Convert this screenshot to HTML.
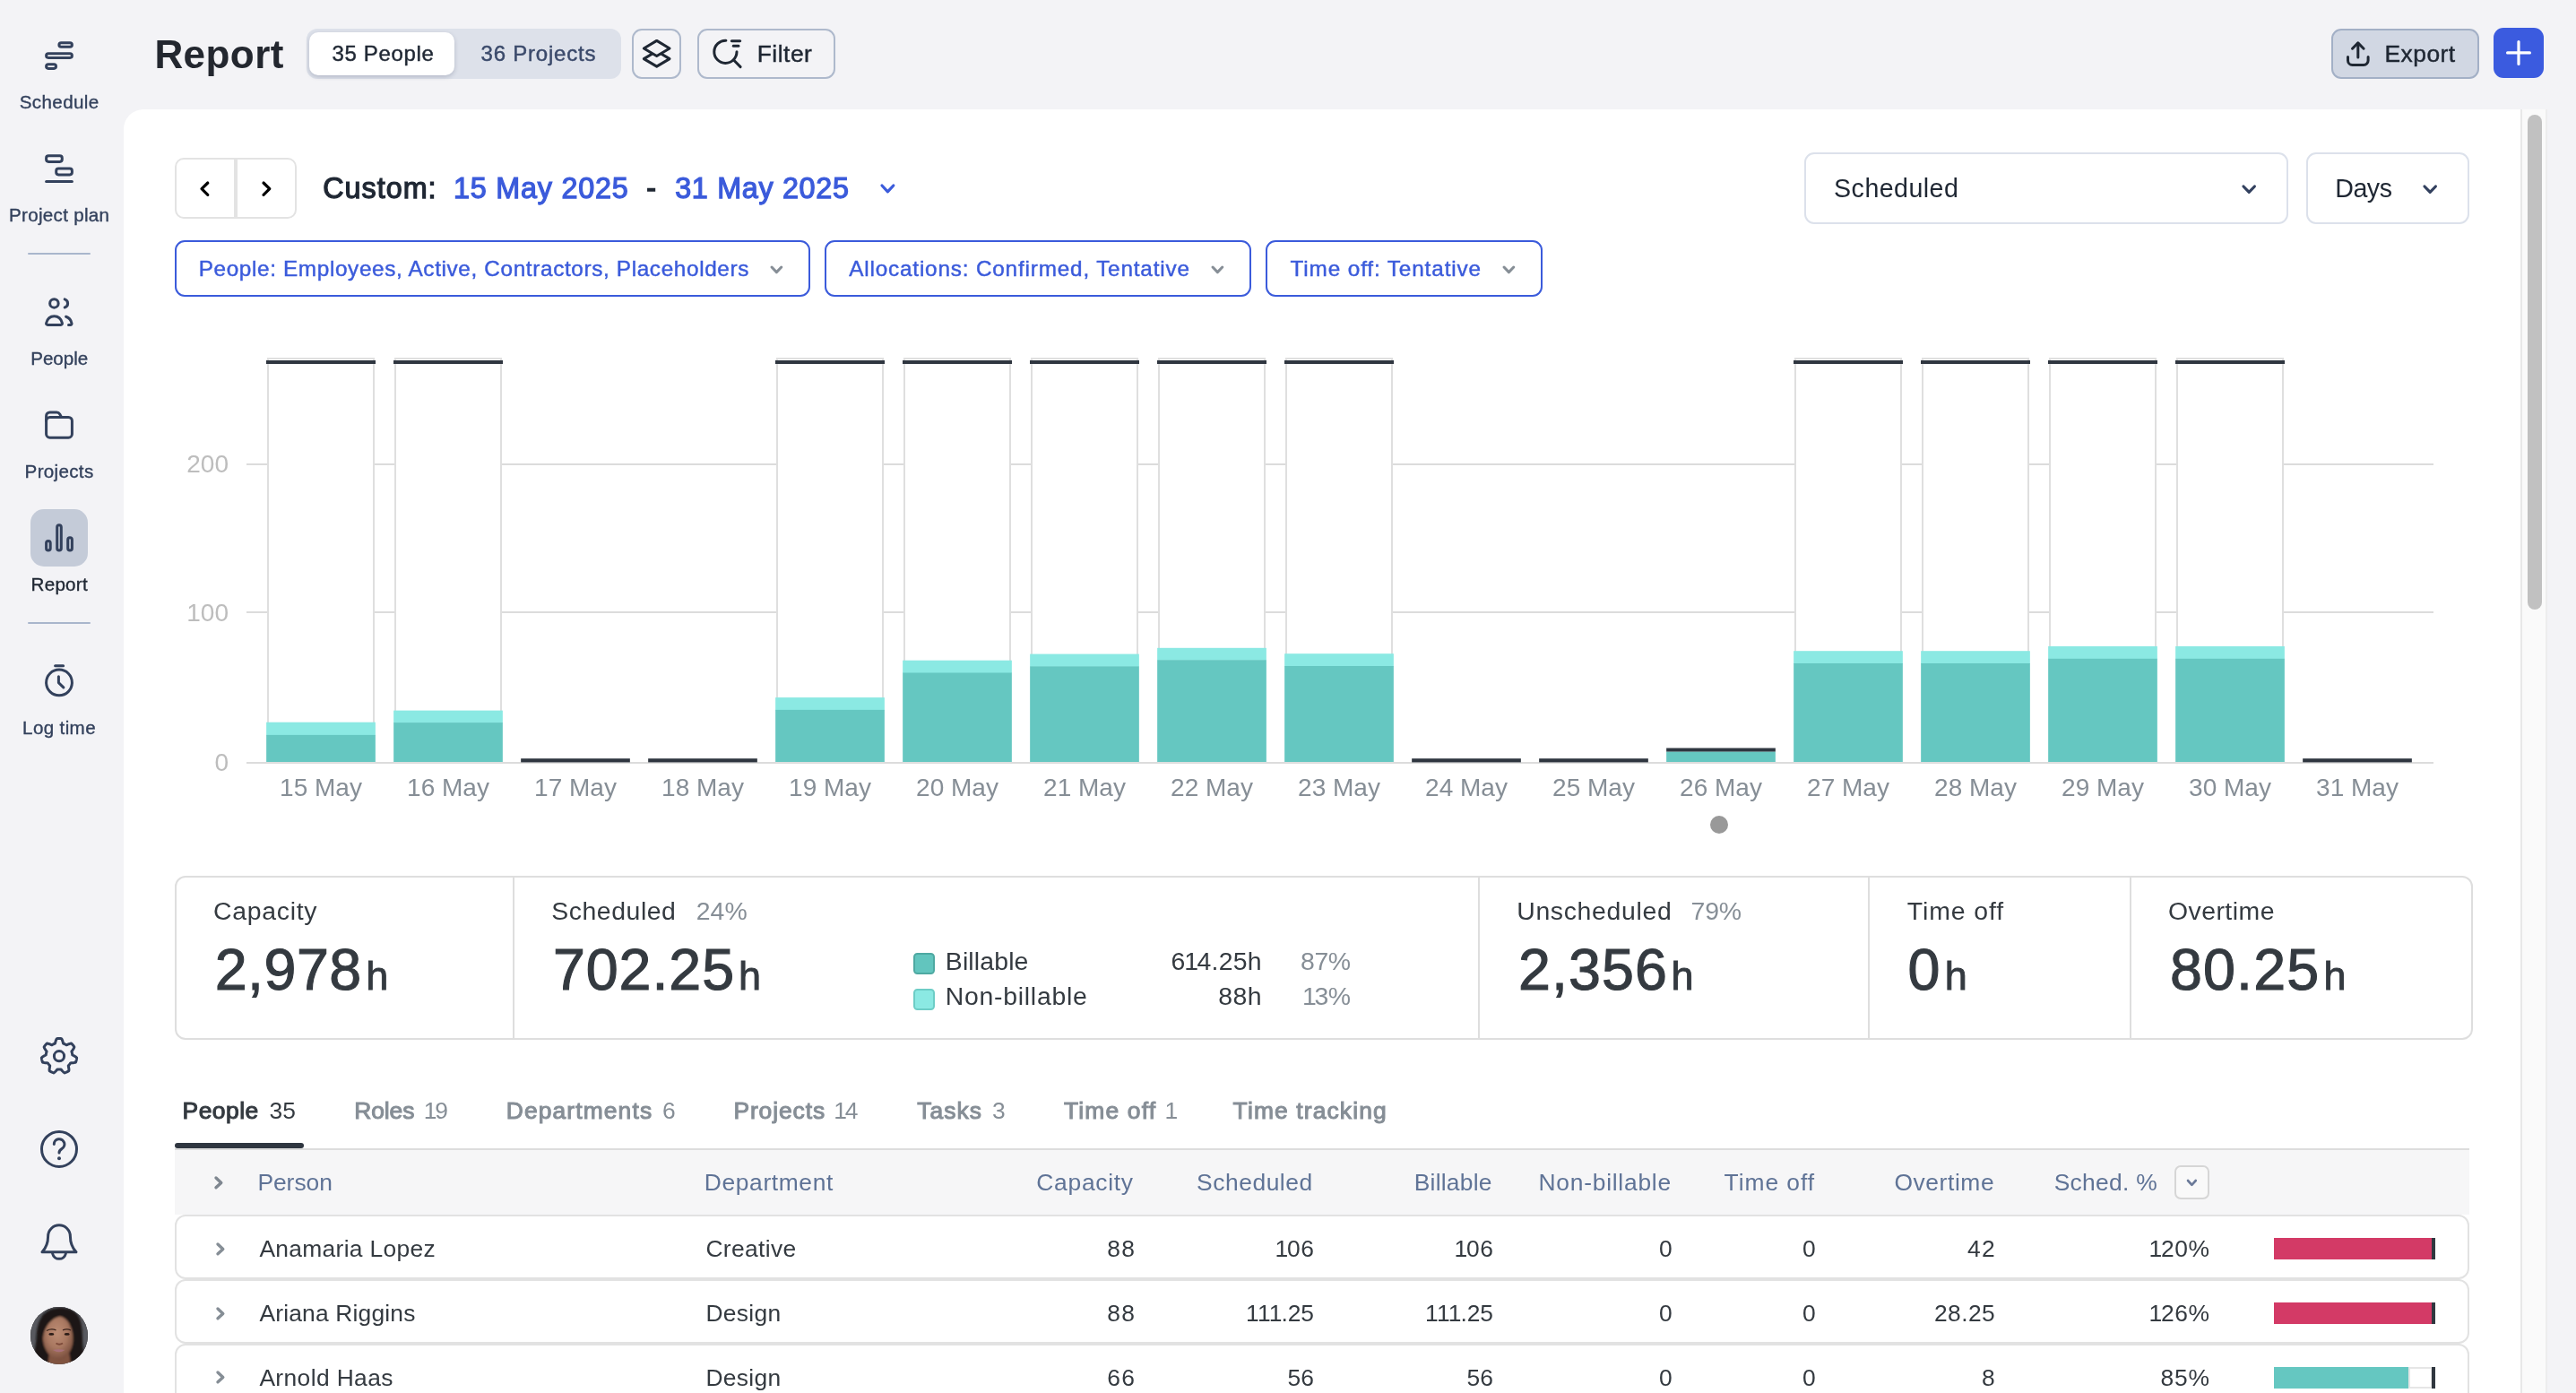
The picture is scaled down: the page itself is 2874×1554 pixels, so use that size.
<!DOCTYPE html>
<html lang="en"><head><meta charset="utf-8"><title>Report</title>
<style>
html,body{margin:0;padding:0;}
html{width:2874px;height:1554px;overflow:hidden;}
body{width:2874px;height:1554px;overflow:hidden;background:#f3f3f6;position:relative;font-family:"Liberation Sans",sans-serif;}
#root{position:absolute;left:0;top:0;width:2874px;height:1554px;overflow:hidden;will-change:transform;}
.b{position:absolute;box-sizing:border-box;}
.t{position:absolute;white-space:nowrap;line-height:1;}
.n1{margin:0 -0.065em 0 -0.055em;}
.n1b{margin:0 -0.035em 0 -0.03em;}
svg{display:block;overflow:visible;}
</style></head><body><div id="root">
<div class="t" style="top:104.01px;font-size:20.60px;color:#33415c;letter-spacing:0.375px;left:66.14px;width:0;display:flex;justify-content:center;-webkit-text-stroke:0.35px #33415c;"><span id="t1">Schedule</span></div>
<div class="t" style="top:230.01px;font-size:20.60px;color:#33415c;letter-spacing:0.294px;left:66.15px;width:0;display:flex;justify-content:center;-webkit-text-stroke:0.35px #33415c;"><span id="t2">Project plan</span></div>
<div class="t" style="top:390.01px;font-size:20.60px;color:#33415c;letter-spacing:-0.025px;left:66.19px;width:0;display:flex;justify-content:center;-webkit-text-stroke:0.35px #33415c;"><span id="t3">People</span></div>
<div class="t" style="top:516.01px;font-size:20.60px;color:#33415c;letter-spacing:0.313px;left:66.06px;width:0;display:flex;justify-content:center;-webkit-text-stroke:0.35px #33415c;"><span id="t4">Projects</span></div>
<div class="b" style="left:34.20px;top:568.10px;width:63.80px;height:64.00px;background:#c4cbd8;border-radius:15px;"></div>
<div class="t" style="top:642.01px;font-size:20.60px;color:#1f2733;letter-spacing:0.237px;left:66.22px;width:0;display:flex;justify-content:center;-webkit-text-stroke:0.35px #1f2733;"><span id="t5">Report</span></div>
<div class="t" style="top:802.02px;font-size:20.60px;color:#33415c;letter-spacing:0.357px;left:66.03px;width:0;display:flex;justify-content:center;-webkit-text-stroke:0.35px #33415c;"><span id="t6">Log time</span></div>
<div class="b" style="left:31.00px;top:281.70px;width:70.00px;height:2.40px;background:#a9b6cc;border-radius:1px;"></div>
<div class="b" style="left:31.00px;top:693.60px;width:70.00px;height:2.40px;background:#a9b6cc;border-radius:1px;"></div>
<svg class="b" style="left:0.00px;top:0.00px;" width="138" height="1554" viewBox="0 0 138 1554"><rect x="65.9" y="47.7" width="14.5" height="4.6" rx="2.3" fill="none" stroke="#33415c" stroke-width="3" stroke-linecap="round" stroke-linejoin="round"/><rect x="51.6" y="59.7" width="28.8" height="4.7" rx="2.35" fill="none" stroke="#33415c" stroke-width="3" stroke-linecap="round" stroke-linejoin="round"/><rect x="51.6" y="71.8" width="10.9" height="4.6" rx="2.3" fill="none" stroke="#33415c" stroke-width="3" stroke-linecap="round" stroke-linejoin="round"/><rect x="51.6" y="173.8" width="17.7" height="6.6" rx="2.6" fill="none" stroke="#33415c" stroke-width="3" stroke-linecap="round" stroke-linejoin="round"/><rect x="62.7" y="188.1" width="17.7" height="6.8" rx="2.6" fill="none" stroke="#33415c" stroke-width="3" stroke-linecap="round" stroke-linejoin="round"/><path d="M51.6 202.5 H80.4" fill="none" stroke="#33415c" stroke-width="3" stroke-linecap="round" stroke-linejoin="round"/><circle cx="60.4" cy="338.4" r="4.75" fill="none" stroke="#33415c" stroke-width="3" stroke-linecap="round" stroke-linejoin="round"/><path d="M53.2 362.5 h14.6 a1.6 1.6 0 0 0 1.6 -2 c-1.2 -4.8 -4.6 -7.7 -8.9 -7.7 s-7.7 2.9 -8.9 7.7 a1.6 1.6 0 0 0 1.6 2 z" fill="none" stroke="#33415c" stroke-width="3" stroke-linecap="round" stroke-linejoin="round"/><path d="M72.2 333.9 a4.75 4.75 0 0 1 0 9.1" fill="none" stroke="#33415c" stroke-width="3" stroke-linecap="round" stroke-linejoin="round"/><path d="M73.6 353.3 c3.4 1.1 5.6 3.7 6.4 7.4 a1.5 1.5 0 0 1 -1.5 1.8 h-2" fill="none" stroke="#33415c" stroke-width="3" stroke-linecap="round" stroke-linejoin="round"/><rect x="51.6" y="465.4" width="28.8" height="22.8" rx="4" fill="none" stroke="#33415c" stroke-width="3" stroke-linecap="round" stroke-linejoin="round"/><path d="M51.6 469.5 v-5.5 a4 4 0 0 1 4 -4 h7.6 a4 4 0 0 1 3.5 2 l1.9 3.4" fill="none" stroke="#33415c" stroke-width="3" stroke-linecap="round" stroke-linejoin="round"/><rect x="51.6" y="603.4" width="4.6" height="10.7" rx="2.3" fill="none" stroke="#33415c" stroke-width="3" stroke-linecap="round" stroke-linejoin="round"/><rect x="63.7" y="585.7" width="4.6" height="28.4" rx="2.3" fill="none" stroke="#33415c" stroke-width="3" stroke-linecap="round" stroke-linejoin="round"/><rect x="75.7" y="599.8" width="4.7" height="14.3" rx="2.3" fill="none" stroke="#33415c" stroke-width="3" stroke-linecap="round" stroke-linejoin="round"/><circle cx="66" cy="761.4" r="14.4" fill="none" stroke="#33415c" stroke-width="3" stroke-linecap="round" stroke-linejoin="round"/><path d="M61.6 742.7 H70.6" fill="none" stroke="#33415c" stroke-width="3" stroke-linecap="round" stroke-linejoin="round"/><path d="M65.4 754.8 V761.6 L70.8 766.9" fill="none" stroke="#33415c" stroke-width="3" stroke-linecap="round" stroke-linejoin="round"/><path d="M66.00 1158.50 L66.63 1158.51 L67.26 1158.54 L67.89 1158.59 L68.52 1158.66 L69.04 1159.39 L69.47 1160.36 L69.84 1161.38 L70.14 1162.41 L70.39 1163.40 L70.66 1164.15 L71.11 1164.31 L71.55 1164.48 L71.99 1164.67 L72.42 1164.87 L72.85 1165.08 L73.26 1165.30 L73.67 1165.54 L74.07 1165.80 L74.84 1165.53 L75.76 1165.12 L76.76 1164.71 L77.78 1164.36 L78.81 1164.09 L79.70 1164.05 L80.15 1164.50 L80.58 1164.96 L81.00 1165.43 L81.40 1165.92 L81.79 1166.42 L82.16 1166.93 L82.51 1167.45 L82.85 1167.99 L82.60 1168.85 L82.12 1169.79 L81.54 1170.72 L80.93 1171.59 L80.31 1172.40 L79.89 1173.09 L80.05 1173.54 L80.19 1173.99 L80.32 1174.45 L80.43 1174.91 L80.53 1175.37 L80.61 1175.84 L80.68 1176.31 L80.73 1176.78 L81.41 1177.21 L82.31 1177.68 L83.25 1178.20 L84.17 1178.78 L85.02 1179.42 L85.61 1180.09 L85.54 1180.72 L85.45 1181.34 L85.34 1181.97 L85.21 1182.58 L85.06 1183.20 L84.89 1183.81 L84.70 1184.41 L84.49 1185.00 L83.66 1185.35 L82.62 1185.56 L81.54 1185.68 L80.47 1185.75 L79.46 1185.78 L78.66 1185.87 L78.40 1186.27 L78.14 1186.67 L77.86 1187.05 L77.57 1187.43 L77.27 1187.79 L76.96 1188.15 L76.63 1188.50 L76.30 1188.83 L76.38 1189.63 L76.58 1190.63 L76.76 1191.69 L76.87 1192.77 L76.90 1193.83 L76.75 1194.71 L76.21 1195.05 L75.67 1195.36 L75.11 1195.67 L74.55 1195.95 L73.97 1196.21 L73.39 1196.46 L72.80 1196.69 L72.21 1196.90 L71.42 1196.47 L70.61 1195.78 L69.84 1195.02 L69.12 1194.22 L68.46 1193.44 L67.89 1192.88 L67.42 1192.93 L66.95 1192.97 L66.47 1192.99 L66.00 1193.00 L65.53 1192.99 L65.05 1192.97 L64.58 1192.93 L64.11 1192.88 L63.54 1193.44 L62.88 1194.22 L62.16 1195.02 L61.39 1195.78 L60.58 1196.47 L59.79 1196.90 L59.20 1196.69 L58.61 1196.46 L58.03 1196.21 L57.45 1195.95 L56.89 1195.67 L56.33 1195.36 L55.79 1195.05 L55.25 1194.71 L55.10 1193.83 L55.13 1192.77 L55.24 1191.69 L55.42 1190.63 L55.62 1189.63 L55.70 1188.83 L55.37 1188.50 L55.04 1188.15 L54.73 1187.79 L54.43 1187.43 L54.14 1187.05 L53.86 1186.67 L53.60 1186.27 L53.34 1185.87 L52.54 1185.78 L51.53 1185.75 L50.46 1185.68 L49.38 1185.56 L48.34 1185.35 L47.51 1185.00 L47.30 1184.41 L47.11 1183.81 L46.94 1183.20 L46.79 1182.58 L46.66 1181.97 L46.55 1181.34 L46.46 1180.72 L46.39 1180.09 L46.98 1179.42 L47.83 1178.78 L48.75 1178.20 L49.69 1177.68 L50.59 1177.21 L51.27 1176.78 L51.32 1176.31 L51.39 1175.84 L51.47 1175.37 L51.57 1174.91 L51.68 1174.45 L51.81 1173.99 L51.95 1173.54 L52.11 1173.09 L51.69 1172.40 L51.07 1171.59 L50.46 1170.72 L49.88 1169.79 L49.40 1168.85 L49.15 1167.99 L49.49 1167.45 L49.84 1166.93 L50.21 1166.42 L50.60 1165.92 L51.00 1165.43 L51.42 1164.96 L51.85 1164.50 L52.30 1164.05 L53.19 1164.09 L54.22 1164.36 L55.24 1164.71 L56.24 1165.12 L57.16 1165.53 L57.93 1165.80 L58.33 1165.54 L58.74 1165.30 L59.15 1165.08 L59.58 1164.87 L60.01 1164.67 L60.45 1164.48 L60.89 1164.31 L61.34 1164.15 L61.61 1163.40 L61.86 1162.41 L62.16 1161.38 L62.53 1160.36 L62.96 1159.39 L63.48 1158.66 L64.11 1158.59 L64.74 1158.54 L65.37 1158.51 Z" fill="none" stroke="#33415c" stroke-width="3" stroke-linecap="round" stroke-linejoin="round"/><circle cx="66" cy="1178.2" r="5.6" fill="none" stroke="#33415c" stroke-width="3" stroke-linecap="round" stroke-linejoin="round"/><circle cx="66" cy="1281.9" r="19.5" fill="none" stroke="#33415c" stroke-width="3" stroke-linecap="round" stroke-linejoin="round"/><path d="M60.3 1276.6 a5.8 5.8 0 1 1 8.6 5 c-2 1.2 -2.9 2.3 -2.9 4.4" fill="none" stroke="#33415c" stroke-width="3" stroke-linecap="round" stroke-linejoin="round"/><circle cx="66" cy="1292.2" r="2" fill="#33415c"/><path d="M47 1396.8 c4.2 -4.6 6.6 -9 6.6 -17.6 a12.4 12.4 0 0 1 24.8 0 c0 8.600 2.4 13 6.600 17.600 z" fill="none" stroke="#33415c" stroke-width="3" stroke-linecap="round" stroke-linejoin="round"/><path d="M58.600 1398.500 a7.600 7.600 0 0 0 14.800 0" fill="none" stroke="#33415c" stroke-width="3" stroke-linecap="round" stroke-linejoin="round"/></svg>
<div class="b" style="left:34.00px;top:1457.70px;width:64.00px;height:64.00px;border-radius:50%;overflow:hidden;background:#1b1817;"><svg width="64" height="64" viewBox="0 0 64 64"><defs><radialGradient id="fg" cx="47%" cy="38%" r="62%"><stop offset="0" stop-color="#bd8d74"/><stop offset="0.55" stop-color="#a97861"/><stop offset="1" stop-color="#7a4f3e"/></radialGradient><filter id="bl" x="-20%" y="-20%" width="140%" height="140%"><feGaussianBlur stdDeviation="0.9"/></filter><filter id="bl2" x="-20%" y="-20%" width="140%" height="140%"><feGaussianBlur stdDeviation="0.5"/></filter></defs><rect width="64" height="64" fill="#58595f"/><g filter="url(#bl)"><path d="M3 70 C2 56 6 46 6.5 35 C7 22 10 12 16 7 C24 -1 44 -1 51 7 C57 13 58 25 58 36 C58 46 61 56 60 70 Z" fill="#1b1817"/><path d="M19 70 L21 50 L43 50 L46 70 Z" fill="#80523f"/><path d="M33 10.500 C24 12 15 22 14 34 C13.500 46 22 58.500 31 59 C40 59 47.500 48 47.500 36 C47.500 24 42 12 33 10.500 Z" fill="url(#fg)"/><path d="M36 8 C42 10 50 22 50 40 C50 48 48 54 44 60 L56 60 L57 30 L50 8 Z" fill="#1b1817"/><path d="M30 8 C22 12 15 20 13.500 34 C13 44 15 50 19 58 L7 60 L7.5 30 L14 8 Z" fill="#1b1817"/></g><g filter="url(#bl2)"><path d="M18 26.500 Q23 23.800 28.500 25.800" stroke="#3a241c" stroke-width="1.300" fill="none"/><path d="M36 25.800 Q41 23.800 45 26" stroke="#3a241c" stroke-width="1.300" fill="none"/><ellipse cx="23.300" cy="30.400" rx="3" ry="1.300" fill="#2b1b18"/><ellipse cx="40.700" cy="30.400" rx="3" ry="1.300" fill="#2b1b18"/><path d="M28.500 40.500 Q32 43 36 40.500" stroke="#7c4a39" stroke-width="1.800" fill="none"/><path d="M25 48 Q31.500 46.600 38.500 48 Q32 52.500 25 48 Z" fill="#a8707a"/></g></svg></div>
<span class="t" id="t7" style="top:39.00px;font-size:44.00px;color:#23272f;font-weight:700;letter-spacing:0.444px;left:172.40px;">Report</span>
<div class="b" style="left:341.60px;top:32.00px;width:351.10px;height:55.90px;background:#dde1ea;border-radius:12px;"></div>
<div class="b" style="left:344.90px;top:35.90px;width:162.20px;height:48.10px;background:#fff;border-radius:10px;box-shadow:0 2px 5px rgba(40,50,80,0.22);"></div>
<span class="t" id="t8" style="top:48.01px;font-size:24.00px;color:#1f2733;letter-spacing:0.651px;left:370.50px;-webkit-text-stroke:0.45px #1f2733;">35 People</span>
<span class="t" id="t9" style="top:48.01px;font-size:24.00px;color:#3b4a6b;letter-spacing:0.794px;left:536.50px;-webkit-text-stroke:0.45px #3b4a6b;">36 Projects</span>
<div class="b" style="left:705.40px;top:32.00px;width:54.90px;height:55.90px;border:2px solid #aeb9cc;border-radius:11px;"></div>
<svg class="b" style="left:705.40px;top:32.00px;" width="54.9" height="55.9" viewBox="0 0 54.9 55.9"><g fill="#f3f3f6" stroke="#1f2733" stroke-width="3" stroke-linejoin="round" stroke-linecap="round"><path d="M27.7 25.05 L42.05 33.6 L27.7 42.15 L13.35 33.6 Z"/><path d="M27.7 13.4 L42.05 21.95 L27.7 30.5 L13.35 21.95 Z"/></g></svg>
<div class="b" style="left:777.70px;top:32.00px;width:154.00px;height:55.90px;border:2px solid #aeb9cc;border-radius:11px;"></div>
<svg class="b" style="left:777.70px;top:32.00px;" width="60" height="55.9" viewBox="0 0 60 55.9"><g fill="none" stroke="#1f2733" stroke-width="3" stroke-linecap="round"><path d="M31.9 13.2 A12.6 12.6 0 1 0 44 25.8"/><path d="M40.6 35 L48.1 42.6"/><path d="M38.3 13.85 H47.7"/><path d="M40.3 19.3 H45.9"/></g></svg>
<span class="t" id="t10" style="top:47.01px;font-size:26.40px;color:#1f2733;letter-spacing:0.509px;left:844.70px;-webkit-text-stroke:0.45px #1f2733;">Filter</span>
<div class="b" style="left:2601.20px;top:32.00px;width:164.60px;height:55.90px;background:#d1d7e3;border:2px solid #a3b0c6;border-radius:11px;"></div>
<svg class="b" style="left:2601.20px;top:32.00px;" width="60" height="55.9" viewBox="0 0 60 55.9"><g fill="none" stroke="#1f2733" stroke-width="3" stroke-linecap="round" stroke-linejoin="round"><path d="M29.800 16.300 V32"/><path d="M23.500 22.200 L29.800 15.900 L36.100 22.200"/><path d="M18.500 31.400 V35.500 A5 5 0 0 0 23.500 40.500 H36.100 A5 5 0 0 0 41.100 35.500 V31.400"/></g></svg>
<span class="t" id="t11" style="top:47.01px;font-size:26.40px;color:#1f2733;letter-spacing:0.484px;left:2660.50px;-webkit-text-stroke:0.45px #1f2733;">Export</span>
<div class="b" style="left:2782.00px;top:31.10px;width:55.90px;height:55.90px;background:#3b5bdf;border-radius:11px;"></div>
<svg class="b" style="left:2782.00px;top:31.10px;" width="55.9" height="55.9" viewBox="0 0 55.9 55.9"><path d="M15.6 27.95 H40.4 M28 15.5 V40.4" fill="none" stroke="#fff" stroke-width="3.2" stroke-linecap="round"/></svg>
<div class="b" style="left:138.00px;top:122.00px;width:2704.00px;height:1432.00px;background:#fff;border-radius:22px 0 0 0;"></div>
<div class="b" style="left:2812.00px;top:122.00px;width:30.00px;height:1432.00px;background:#fafafa;border-left:2px solid #e8e8e8;border-right:2px solid #ededed;"></div>
<div class="b" style="left:2820.00px;top:128.00px;width:16.00px;height:552.00px;background:#c1c1c1;border-radius:8px;"></div>
<div class="b" style="left:195.00px;top:176.00px;width:136.00px;height:68.00px;border:2px solid #e3e3e3;border-radius:10px;"></div>
<div class="b" style="left:261.00px;top:176.00px;width:4.00px;height:68.00px;background:#e3e3e3;"></div>
<svg class="b" style="left:221.80px;top:200.80px;" width="12.8" height="19.4" viewBox="0 0 12.8 19.4"><path d="M9.8 3 L3 9.7 L9.8 16.4" fill="none" stroke="#000" stroke-width="3.2" stroke-linecap="round" stroke-linejoin="round"/></svg>
<svg class="b" style="left:291.20px;top:200.80px;" width="12.8" height="19.4" viewBox="0 0 12.8 19.4"><path d="M3 3 L9.8 9.7 L3 16.4" fill="none" stroke="#000" stroke-width="3.2" stroke-linecap="round" stroke-linejoin="round"/></svg>
<span class="t" id="t12" style="top:194.00px;font-size:32.30px;color:#1f2733;letter-spacing:0.992px;left:360.30px;-webkit-text-stroke:1.25px #1f2733;">Custom:</span>
<span class="t" id="t13" style="top:194.00px;font-size:32.30px;color:#3b5bdb;letter-spacing:0.797px;left:506.00px;-webkit-text-stroke:1.25px #3b5bdb;">15 May 2025</span>
<span class="t" id="t14" style="top:194.00px;font-size:32.30px;color:#1f2733;left:721.20px;-webkit-text-stroke:1.25px #1f2733;">-</span>
<span class="t" id="t15" style="top:194.00px;font-size:32.30px;color:#3b5bdb;letter-spacing:0.697px;left:753.20px;-webkit-text-stroke:1.25px #3b5bdb;">31 May 2025</span>
<svg class="b" style="left:981.10px;top:204.40px;" width="18.8" height="12.8" viewBox="0 0 18.8 12.8"><path d="M3 3 L9.4 9.8 L15.8 3" fill="none" stroke="#3b5bdb" stroke-width="3.2" stroke-linecap="round" stroke-linejoin="round"/></svg>
<div class="b" style="left:195.00px;top:268.00px;width:709.00px;height:63.40px;border:2px solid #3b5bdb;border-radius:11px;"></div>
<span class="t" id="t16" style="top:288.01px;font-size:24.30px;color:#3b5bdb;letter-spacing:0.647px;left:221.70px;-webkit-text-stroke:0.45px #3b5bdb;">People: Employees, Active, Contractors, Placeholders</span>
<svg class="b" style="left:857.60px;top:294.80px;" width="16.8" height="11.6" viewBox="0 0 16.8 11.6"><path d="M3 3 L8.4 8.6 L13.8 3" fill="none" stroke="#868e96" stroke-width="3" stroke-linecap="round" stroke-linejoin="round"/></svg>
<div class="b" style="left:920.00px;top:268.00px;width:476.00px;height:63.40px;border:2px solid #3b5bdb;border-radius:11px;"></div>
<span class="t" id="t17" style="top:288.01px;font-size:24.30px;color:#3b5bdb;letter-spacing:0.825px;left:947.20px;-webkit-text-stroke:0.45px #3b5bdb;">Allocations: Confirmed, Tentative</span>
<svg class="b" style="left:1349.90px;top:294.80px;" width="16.8" height="11.6" viewBox="0 0 16.8 11.6"><path d="M3 3 L8.4 8.6 L13.8 3" fill="none" stroke="#868e96" stroke-width="3" stroke-linecap="round" stroke-linejoin="round"/></svg>
<div class="b" style="left:1412.00px;top:268.00px;width:308.60px;height:63.40px;border:2px solid #3b5bdb;border-radius:11px;"></div>
<span class="t" id="t18" style="top:288.01px;font-size:24.30px;color:#3b5bdb;letter-spacing:0.881px;left:1439.50px;-webkit-text-stroke:0.45px #3b5bdb;">Time off: Tentative</span>
<svg class="b" style="left:1674.60px;top:294.80px;" width="16.8" height="11.6" viewBox="0 0 16.8 11.6"><path d="M3 3 L8.4 8.6 L13.8 3" fill="none" stroke="#868e96" stroke-width="3" stroke-linecap="round" stroke-linejoin="round"/></svg>
<div class="b" style="left:2013.00px;top:170.00px;width:540.00px;height:80.00px;border:2px solid #dce1eb;border-radius:11px;"></div>
<span class="t" id="t19" style="top:196.00px;font-size:28.60px;color:#1f2733;letter-spacing:0.457px;left:2046.10px;">Scheduled</span>
<svg class="b" style="left:2500.00px;top:205.20px;" width="18.4" height="12.4" viewBox="0 0 18.4 12.4"><path d="M3 3 L9.2 9.4 L15.4 3" fill="none" stroke="#33415f" stroke-width="3.2" stroke-linecap="round" stroke-linejoin="round"/></svg>
<div class="b" style="left:2573.00px;top:170.00px;width:182.00px;height:80.00px;border:2px solid #dce1eb;border-radius:11px;"></div>
<span class="t" id="t20" style="top:196.00px;font-size:28.60px;color:#1f2733;letter-spacing:-0.450px;left:2605.20px;">Days</span>
<svg class="b" style="left:2701.70px;top:205.20px;" width="18.4" height="12.4" viewBox="0 0 18.4 12.4"><path d="M3 3 L9.2 9.4 L15.4 3" fill="none" stroke="#33415f" stroke-width="3.2" stroke-linecap="round" stroke-linejoin="round"/></svg>
<svg class="b" style="left:0.00px;top:0.00px;pointer-events:none;" width="2874" height="1000" viewBox="0 0 2874 1000"><rect x="275" y="517.0" width="2440" height="2" fill="#dcdcdc"/><rect x="275" y="682.0" width="2440" height="2" fill="#dcdcdc"/><rect x="275" y="850.0" width="2440" height="2" fill="#dcdcdc"/><rect x="299.0" y="400" width="118" height="450.0" fill="#fff" stroke="#dfdfdf" stroke-width="2"/><rect x="297.00" y="402" width="122" height="4" fill="#2f3640"/><rect x="297.15" y="805.7" width="121.700" height="14.7" fill="#8be9e3"/><rect x="297.15" y="819.9" width="121.700" height="30.1" fill="#65c7c1"/><rect x="441.0" y="400" width="118" height="450.0" fill="#fff" stroke="#dfdfdf" stroke-width="2"/><rect x="439.00" y="402" width="122" height="4" fill="#2f3640"/><rect x="439.15" y="792.6" width="121.700" height="14.0" fill="#8be9e3"/><rect x="439.15" y="806.1" width="121.700" height="43.9" fill="#65c7c1"/><rect x="581.15" y="846.2" width="121.700" height="4.2" fill="#2f3640"/><rect x="723.15" y="846.2" width="121.700" height="4.2" fill="#2f3640"/><rect x="867.0" y="400" width="118" height="450.0" fill="#fff" stroke="#dfdfdf" stroke-width="2"/><rect x="865.00" y="402" width="122" height="4" fill="#2f3640"/><rect x="865.15" y="778.1" width="121.700" height="14.3" fill="#8be9e3"/><rect x="865.15" y="791.9" width="121.700" height="58.1" fill="#65c7c1"/><rect x="1009.0" y="400" width="118" height="450.0" fill="#fff" stroke="#dfdfdf" stroke-width="2"/><rect x="1007.00" y="402" width="122" height="4" fill="#2f3640"/><rect x="1007.15" y="736.7" width="121.700" height="14.3" fill="#8be9e3"/><rect x="1007.15" y="750.5" width="121.700" height="99.5" fill="#65c7c1"/><rect x="1151.0" y="400" width="118" height="450.0" fill="#fff" stroke="#dfdfdf" stroke-width="2"/><rect x="1149.00" y="402" width="122" height="4" fill="#2f3640"/><rect x="1149.15" y="729.6" width="121.700" height="14.3" fill="#8be9e3"/><rect x="1149.15" y="743.4" width="121.700" height="106.6" fill="#65c7c1"/><rect x="1293.0" y="400" width="118" height="450.0" fill="#fff" stroke="#dfdfdf" stroke-width="2"/><rect x="1291.00" y="402" width="122" height="4" fill="#2f3640"/><rect x="1291.15" y="722.8" width="121.700" height="14.0" fill="#8be9e3"/><rect x="1291.15" y="736.3" width="121.700" height="113.7" fill="#65c7c1"/><rect x="1435.0" y="400" width="118" height="450.0" fill="#fff" stroke="#dfdfdf" stroke-width="2"/><rect x="1433.00" y="402" width="122" height="4" fill="#2f3640"/><rect x="1433.15" y="729.2" width="121.700" height="14.3" fill="#8be9e3"/><rect x="1433.15" y="743.0" width="121.700" height="107.0" fill="#65c7c1"/><rect x="1575.15" y="846.2" width="121.700" height="4.2" fill="#2f3640"/><rect x="1717.15" y="846.2" width="121.700" height="4.2" fill="#2f3640"/><rect x="1859.15" y="838.4" width="121.700" height="11.6" fill="#65c7c1"/><rect x="1859.15" y="834.5" width="121.700" height="4" fill="#2f3640"/><rect x="2003.0" y="400" width="118" height="450.0" fill="#fff" stroke="#dfdfdf" stroke-width="2"/><rect x="2001.00" y="402" width="122" height="4" fill="#2f3640"/><rect x="2001.15" y="726.2" width="121.700" height="14.3" fill="#8be9e3"/><rect x="2001.15" y="740.0" width="121.700" height="110.0" fill="#65c7c1"/><rect x="2145.0" y="400" width="118" height="450.0" fill="#fff" stroke="#dfdfdf" stroke-width="2"/><rect x="2143.00" y="402" width="122" height="4" fill="#2f3640"/><rect x="2143.15" y="726.2" width="121.700" height="14.3" fill="#8be9e3"/><rect x="2143.15" y="740.0" width="121.700" height="110.0" fill="#65c7c1"/><rect x="2287.0" y="400" width="118" height="450.0" fill="#fff" stroke="#dfdfdf" stroke-width="2"/><rect x="2285.00" y="402" width="122" height="4" fill="#2f3640"/><rect x="2285.15" y="721.0" width="121.700" height="14.3" fill="#8be9e3"/><rect x="2285.15" y="734.8" width="121.700" height="115.2" fill="#65c7c1"/><rect x="2429.0" y="400" width="118" height="450.0" fill="#fff" stroke="#dfdfdf" stroke-width="2"/><rect x="2427.00" y="402" width="122" height="4" fill="#2f3640"/><rect x="2427.15" y="721.0" width="121.700" height="14.3" fill="#8be9e3"/><rect x="2427.15" y="734.8" width="121.700" height="115.2" fill="#65c7c1"/><rect x="2569.15" y="846.2" width="121.700" height="4.2" fill="#2f3640"/></svg>
<span class="t" id="t21" style="top:504.00px;font-size:28.00px;color:#bdbdbd;right:2619.00px;">200</span>
<span class="t" id="t22" style="top:670.01px;font-size:28.00px;color:#bdbdbd;right:2619.00px;">100</span>
<span class="t" id="t23" style="top:837.00px;font-size:28.00px;color:#bdbdbd;right:2619.00px;">0</span>
<div class="t" style="top:865.00px;font-size:28.00px;color:#868e96;left:358.00px;width:0;display:flex;justify-content:center;"><span id="t24">15 May</span></div>
<div class="t" style="top:865.00px;font-size:28.00px;color:#868e96;left:500.00px;width:0;display:flex;justify-content:center;"><span id="t25">16 May</span></div>
<div class="t" style="top:865.00px;font-size:28.00px;color:#868e96;left:642.00px;width:0;display:flex;justify-content:center;"><span id="t26">17 May</span></div>
<div class="t" style="top:865.00px;font-size:28.00px;color:#868e96;left:784.00px;width:0;display:flex;justify-content:center;"><span id="t27">18 May</span></div>
<div class="t" style="top:865.00px;font-size:28.00px;color:#868e96;left:926.00px;width:0;display:flex;justify-content:center;"><span id="t28">19 May</span></div>
<div class="t" style="top:865.00px;font-size:28.00px;color:#868e96;left:1068.00px;width:0;display:flex;justify-content:center;"><span id="t29">20 May</span></div>
<div class="t" style="top:865.00px;font-size:28.00px;color:#868e96;left:1210.00px;width:0;display:flex;justify-content:center;"><span id="t30">21 May</span></div>
<div class="t" style="top:865.00px;font-size:28.00px;color:#868e96;left:1352.00px;width:0;display:flex;justify-content:center;"><span id="t31">22 May</span></div>
<div class="t" style="top:865.00px;font-size:28.00px;color:#868e96;left:1494.00px;width:0;display:flex;justify-content:center;"><span id="t32">23 May</span></div>
<div class="t" style="top:865.00px;font-size:28.00px;color:#868e96;left:1636.00px;width:0;display:flex;justify-content:center;"><span id="t33">24 May</span></div>
<div class="t" style="top:865.00px;font-size:28.00px;color:#868e96;left:1778.00px;width:0;display:flex;justify-content:center;"><span id="t34">25 May</span></div>
<div class="t" style="top:865.00px;font-size:28.00px;color:#868e96;left:1920.00px;width:0;display:flex;justify-content:center;"><span id="t35">26 May</span></div>
<div class="t" style="top:865.00px;font-size:28.00px;color:#868e96;left:2062.00px;width:0;display:flex;justify-content:center;"><span id="t36">27 May</span></div>
<div class="t" style="top:865.00px;font-size:28.00px;color:#868e96;left:2204.00px;width:0;display:flex;justify-content:center;"><span id="t37">28 May</span></div>
<div class="t" style="top:865.00px;font-size:28.00px;color:#868e96;left:2346.00px;width:0;display:flex;justify-content:center;"><span id="t38">29 May</span></div>
<div class="t" style="top:865.00px;font-size:28.00px;color:#868e96;left:2488.00px;width:0;display:flex;justify-content:center;"><span id="t39">30 May</span></div>
<div class="t" style="top:865.00px;font-size:28.00px;color:#868e96;left:2630.00px;width:0;display:flex;justify-content:center;"><span id="t40">31 May</span></div>
<div class="b" style="left:1908.00px;top:910.00px;width:20.00px;height:20.00px;background:#999;border-radius:50%;"></div>
<div class="b" style="left:195.00px;top:977.00px;width:2563.50px;height:183.00px;border:2px solid #dedede;border-radius:12px;"></div>
<div class="b" style="left:571.90px;top:979.00px;width:2.00px;height:179.50px;background:#dedede;"></div>
<div class="b" style="left:1648.60px;top:979.00px;width:2.00px;height:179.50px;background:#dedede;"></div>
<div class="b" style="left:2083.80px;top:979.00px;width:2.00px;height:179.50px;background:#dedede;"></div>
<div class="b" style="left:2375.90px;top:979.00px;width:2.00px;height:179.50px;background:#dedede;"></div>
<span class="t" id="t41" style="top:1002.00px;font-size:28.40px;color:#343a40;letter-spacing:0.719px;left:238.00px;">Capacity</span>
<span class="t" id="t42" style="top:1050.00px;font-size:64.60px;color:#343a40;letter-spacing:0.486px;left:239.70px;-webkit-text-stroke:1.1px #343a40;">2,978</span>
<span class="t" id="t43" style="top:1066.00px;font-size:45.00px;color:#343a40;left:408.20px;-webkit-text-stroke:0.9px #343a40;">h</span>
<span class="t" id="t44" style="top:1002.00px;font-size:28.40px;color:#343a40;letter-spacing:0.552px;left:615.30px;">Scheduled</span>
<span class="t" id="t45" style="top:1002.00px;font-size:28.40px;color:#868e96;letter-spacing:0.086px;left:776.70px;">24%</span>
<span class="t" id="t46" style="top:1050.00px;font-size:64.60px;color:#343a40;letter-spacing:0.924px;left:616.90px;-webkit-text-stroke:1.1px #343a40;">702.25</span>
<span class="t" id="t47" style="top:1066.00px;font-size:45.00px;color:#343a40;left:824.00px;-webkit-text-stroke:0.9px #343a40;">h</span>
<span class="t" id="t48" style="top:1002.00px;font-size:28.40px;color:#343a40;letter-spacing:0.687px;left:1692.20px;">Unscheduled</span>
<span class="t" id="t49" style="top:1002.00px;font-size:28.40px;color:#868e96;letter-spacing:-0.114px;left:1886.50px;">79%</span>
<span class="t" id="t50" style="top:1050.00px;font-size:64.60px;color:#343a40;letter-spacing:1.086px;left:1694.00px;-webkit-text-stroke:1.1px #343a40;">2,356</span>
<span class="t" id="t51" style="top:1066.00px;font-size:45.00px;color:#343a40;left:1864.40px;-webkit-text-stroke:0.9px #343a40;">h</span>
<span class="t" id="t52" style="top:1002.00px;font-size:28.40px;color:#343a40;letter-spacing:0.931px;left:2127.70px;">Time off</span>
<span class="t" id="t53" style="top:1050.00px;font-size:64.60px;color:#343a40;left:2128.60px;-webkit-text-stroke:1.1px #343a40;">0</span>
<span class="t" id="t54" style="top:1066.00px;font-size:45.00px;color:#343a40;left:2169.70px;-webkit-text-stroke:0.9px #343a40;">h</span>
<span class="t" id="t55" style="top:1002.00px;font-size:28.40px;color:#343a40;letter-spacing:0.490px;left:2418.90px;">Overtime</span>
<span class="t" id="t56" style="top:1050.00px;font-size:64.60px;color:#343a40;letter-spacing:1.086px;left:2421.10px;-webkit-text-stroke:1.1px #343a40;">80.25</span>
<span class="t" id="t57" style="top:1066.00px;font-size:45.00px;color:#343a40;left:2592.40px;-webkit-text-stroke:0.9px #343a40;">h</span>
<div class="b" style="left:1018.90px;top:1063.00px;width:24.10px;height:23.50px;background:#62c5be;border:2px solid #4ea9a2;border-radius:4.5px;"></div>
<div class="b" style="left:1018.90px;top:1103.10px;width:24.10px;height:23.80px;background:#8be9e3;border:2px solid #6dcdc6;border-radius:4.5px;"></div>
<span class="t" id="t58" style="top:1058.01px;font-size:28.40px;color:#343a40;letter-spacing:0.150px;left:1054.80px;">Billable</span>
<span class="t" id="t59" style="top:1097.00px;font-size:28.40px;color:#343a40;letter-spacing:0.733px;left:1054.80px;">Non-billable</span>
<span class="t" id="t60" style="top:1058.01px;font-size:28.40px;color:#343a40;letter-spacing:0.292px;right:1466.11px;">6<span class="n1">1</span>4.25h</span>
<span class="t" id="t61" style="top:1097.00px;font-size:28.40px;color:#343a40;letter-spacing:0.462px;right:1465.94px;">88h</span>
<span class="t" id="t62" style="top:1058.01px;font-size:28.40px;color:#868e96;letter-spacing:-0.450px;right:1367.45px;">87%</span>
<span class="t" id="t63" style="top:1097.00px;font-size:28.40px;color:#868e96;letter-spacing:-0.450px;right:1367.45px;"><span class="n1">1</span>3%</span>
<span class="t" id="t64" style="top:1226.01px;font-size:26.40px;color:#343a40;letter-spacing:0.523px;left:203.50px;-webkit-text-stroke:1.05px #343a40;">People</span>
<span class="t" id="t65" style="top:1226.01px;font-size:26.40px;color:#343a40;letter-spacing:0.041px;left:300.60px;">35</span>
<span class="t" id="t66" style="top:1226.01px;font-size:26.40px;color:#868e96;letter-spacing:-0.071px;left:395.20px;-webkit-text-stroke:1.05px #868e96;">Roles</span>
<span class="t" id="t67" style="top:1226.01px;font-size:26.40px;color:#868e96;letter-spacing:-0.450px;left:474.10px;"><span class="n1">1</span>9</span>
<span class="t" id="t68" style="top:1226.01px;font-size:26.40px;color:#868e96;letter-spacing:1.132px;left:564.70px;-webkit-text-stroke:1.05px #868e96;">Departments</span>
<span class="t" id="t69" style="top:1226.01px;font-size:26.40px;color:#868e96;left:738.90px;">6</span>
<span class="t" id="t70" style="top:1226.01px;font-size:26.40px;color:#868e96;letter-spacing:0.908px;left:818.40px;-webkit-text-stroke:1.05px #868e96;">Projects</span>
<span class="t" id="t71" style="top:1226.01px;font-size:26.40px;color:#868e96;letter-spacing:-0.450px;left:931.60px;"><span class="n1">1</span>4</span>
<span class="t" id="t72" style="top:1226.01px;font-size:26.40px;color:#868e96;letter-spacing:1.058px;left:1023.30px;-webkit-text-stroke:1.05px #868e96;">Tasks</span>
<span class="t" id="t73" style="top:1226.01px;font-size:26.40px;color:#868e96;left:1106.90px;">3</span>
<span class="t" id="t74" style="top:1226.01px;font-size:26.40px;color:#868e96;letter-spacing:1.161px;left:1187.00px;-webkit-text-stroke:1.05px #868e96;">Time off</span>
<span class="t" id="t75" style="top:1226.01px;font-size:26.40px;color:#868e96;left:1301.00px;"><span class="n1">1</span></span>
<span class="t" id="t76" style="top:1226.01px;font-size:26.40px;color:#868e96;letter-spacing:1.141px;left:1375.60px;-webkit-text-stroke:1.05px #868e96;">Time tracking</span>
<div class="b" style="left:195.00px;top:1280.90px;width:2560.00px;height:2.00px;background:#dddddd;"></div>
<div class="b" style="left:195.00px;top:1275.00px;width:144.10px;height:6.00px;background:#2f3640;border-radius:3px;"></div>
<div class="b" style="left:195.00px;top:1282.90px;width:2560.00px;height:72.10px;background:#f6f6f7;"></div>
<svg class="b" style="left:237.70px;top:1310.60px;" width="11.8" height="16.8" viewBox="0 0 11.8 16.8"><path d="M3 3 L8.8 8.4 L3 13.8" fill="none" stroke="#7f8790" stroke-width="3.4" stroke-linecap="round" stroke-linejoin="round"/></svg>
<span class="t" id="t77" style="top:1306.00px;font-size:26.40px;color:#5f7396;letter-spacing:-0.025px;left:287.40px;">Person</span>
<span class="t" id="t78" style="top:1306.00px;font-size:26.40px;color:#5f7396;letter-spacing:0.623px;left:785.80px;">Department</span>
<span class="t" id="t79" style="top:1306.00px;font-size:26.40px;color:#5f7396;letter-spacing:0.716px;right:1609.28px;">Capacity</span>
<span class="t" id="t80" style="top:1306.00px;font-size:26.40px;color:#5f7396;letter-spacing:0.558px;right:1409.24px;">Scheduled</span>
<span class="t" id="t81" style="top:1306.00px;font-size:26.40px;color:#5f7396;letter-spacing:0.229px;right:1209.37px;">Billable</span>
<span class="t" id="t82" style="top:1306.00px;font-size:26.40px;color:#5f7396;letter-spacing:0.748px;right:1009.15px;">Non-billable</span>
<span class="t" id="t83" style="top:1306.00px;font-size:26.40px;color:#5f7396;letter-spacing:0.932px;right:849.07px;">Time off</span>
<span class="t" id="t84" style="top:1306.00px;font-size:26.40px;color:#5f7396;letter-spacing:0.593px;right:648.81px;">Overtime</span>
<span class="t" id="t85" style="top:1306.00px;font-size:26.40px;color:#5f7396;letter-spacing:0.290px;right:467.01px;">Sched. %</span>
<div class="b" style="left:2425.90px;top:1300.00px;width:38.70px;height:38.20px;border:2px solid #d6d6d6;border-radius:7px;background:#f9f9f9;"></div>
<svg class="b" style="left:2437.80px;top:1314.30px;" width="14.8" height="10.8" viewBox="0 0 14.8 10.8"><path d="M3 3 L7.4 7.8 L11.8 3" fill="none" stroke="#6b7a99" stroke-width="2.6" stroke-linecap="round" stroke-linejoin="round"/></svg>
<div class="b" style="left:195.00px;top:1355.00px;width:2560.00px;height:72.00px;background:#fff;border:2px solid #e2e2e2;border-radius:12px;"></div>
<svg class="b" style="left:239.70px;top:1384.90px;" width="11.8" height="16.8" viewBox="0 0 11.8 16.8"><path d="M3 3 L8.8 8.4 L3 13.8" fill="none" stroke="#868e96" stroke-width="3.4" stroke-linecap="round" stroke-linejoin="round"/></svg>
<span class="t" id="t86" style="top:1380.01px;font-size:26.40px;color:#343a40;letter-spacing:0.316px;left:289.40px;">Anamaria Lopez</span>
<span class="t" id="t87" style="top:1380.01px;font-size:26.40px;color:#343a40;letter-spacing:0.360px;left:787.40px;">Creative</span>
<span class="t" id="t88" style="top:1380.01px;font-size:26.40px;color:#343a40;letter-spacing:1.341px;right:1606.66px;">88</span>
<span class="t" id="t89" style="top:1380.01px;font-size:26.40px;color:#343a40;letter-spacing:0.547px;right:1407.45px;"><span class="n1">1</span>06</span>
<span class="t" id="t90" style="top:1380.01px;font-size:26.40px;color:#343a40;letter-spacing:0.547px;right:1207.45px;"><span class="n1">1</span>06</span>
<span class="t" id="t91" style="top:1380.01px;font-size:26.40px;color:#343a40;right:1008.30px;">0</span>
<span class="t" id="t92" style="top:1380.01px;font-size:26.40px;color:#343a40;right:848.40px;">0</span>
<span class="t" id="t93" style="top:1380.01px;font-size:26.40px;color:#343a40;letter-spacing:1.341px;right:646.96px;">42</span>
<span class="t" id="t94" style="top:1380.01px;font-size:26.40px;color:#343a40;letter-spacing:0.542px;right:408.46px;"><span class="n1">1</span>20%</span>
<div class="b" style="left:2537.00px;top:1381.20px;width:177.00px;height:23.80px;background:#d33a66;"></div>
<div class="b" style="left:2713.30px;top:1381.20px;width:3.70px;height:23.80px;background:#30373f;"></div>
<div class="b" style="left:195.00px;top:1427.00px;width:2560.00px;height:72.00px;background:#fff;border:2px solid #e2e2e2;border-radius:12px;"></div>
<svg class="b" style="left:239.70px;top:1456.60px;" width="11.8" height="16.8" viewBox="0 0 11.8 16.8"><path d="M3 3 L8.8 8.4 L3 13.8" fill="none" stroke="#868e96" stroke-width="3.4" stroke-linecap="round" stroke-linejoin="round"/></svg>
<span class="t" id="t95" style="top:1452.01px;font-size:26.40px;color:#343a40;letter-spacing:0.181px;left:289.40px;">Ariana Riggins</span>
<span class="t" id="t96" style="top:1452.01px;font-size:26.40px;color:#343a40;letter-spacing:0.329px;left:787.40px;">Design</span>
<span class="t" id="t97" style="top:1452.01px;font-size:26.40px;color:#343a40;letter-spacing:1.341px;right:1606.66px;">88</span>
<span class="t" id="t98" style="top:1452.01px;font-size:26.40px;color:#343a40;letter-spacing:-0.100px;right:1408.10px;"><span class="n1b">1</span><span class="n1b">1</span><span class="n1b">1</span>.25</span>
<span class="t" id="t99" style="top:1452.01px;font-size:26.40px;color:#343a40;letter-spacing:-0.100px;right:1208.10px;"><span class="n1b">1</span><span class="n1b">1</span><span class="n1b">1</span>.25</span>
<span class="t" id="t100" style="top:1452.01px;font-size:26.40px;color:#343a40;right:1008.30px;">0</span>
<span class="t" id="t101" style="top:1452.01px;font-size:26.40px;color:#343a40;right:848.40px;">0</span>
<span class="t" id="t102" style="top:1452.01px;font-size:26.40px;color:#343a40;letter-spacing:0.438px;right:647.86px;">28.25</span>
<span class="t" id="t103" style="top:1452.01px;font-size:26.40px;color:#343a40;letter-spacing:0.542px;right:408.46px;"><span class="n1">1</span>26%</span>
<div class="b" style="left:2537.00px;top:1453.25px;width:177.00px;height:23.80px;background:#d33a66;"></div>
<div class="b" style="left:2713.30px;top:1453.25px;width:3.70px;height:23.80px;background:#30373f;"></div>
<div class="b" style="left:195.00px;top:1499.00px;width:2560.00px;height:72.00px;background:#fff;border:2px solid #e2e2e2;border-radius:12px;"></div>
<svg class="b" style="left:239.70px;top:1528.30px;" width="11.8" height="16.8" viewBox="0 0 11.8 16.8"><path d="M3 3 L8.8 8.4 L3 13.8" fill="none" stroke="#868e96" stroke-width="3.4" stroke-linecap="round" stroke-linejoin="round"/></svg>
<span class="t" id="t104" style="top:1524.00px;font-size:26.40px;color:#343a40;letter-spacing:0.377px;left:289.40px;">Arnold Haas</span>
<span class="t" id="t105" style="top:1524.00px;font-size:26.40px;color:#343a40;letter-spacing:0.329px;left:787.40px;">Design</span>
<span class="t" id="t106" style="top:1524.00px;font-size:26.40px;color:#343a40;letter-spacing:1.341px;right:1606.66px;">66</span>
<span class="t" id="t107" style="top:1524.00px;font-size:26.40px;color:#343a40;letter-spacing:0.041px;right:1407.96px;">56</span>
<span class="t" id="t108" style="top:1524.00px;font-size:26.40px;color:#343a40;letter-spacing:0.041px;right:1207.96px;">56</span>
<span class="t" id="t109" style="top:1524.00px;font-size:26.40px;color:#343a40;right:1008.30px;">0</span>
<span class="t" id="t110" style="top:1524.00px;font-size:26.40px;color:#343a40;right:848.40px;">0</span>
<span class="t" id="t111" style="top:1524.00px;font-size:26.40px;color:#343a40;right:648.30px;">8</span>
<span class="t" id="t112" style="top:1524.00px;font-size:26.40px;color:#343a40;letter-spacing:0.836px;right:408.16px;">85%</span>
<div class="b" style="left:2537.00px;top:1525.30px;width:151.00px;height:23.80px;background:#65c7c1;"></div>
<div class="b" style="left:2687.00px;top:1525.30px;width:27.00px;height:23.80px;background:#fff;border:2px solid #e6e6e6;"></div>
<div class="b" style="left:2713.30px;top:1525.30px;width:3.70px;height:23.80px;background:#30373f;"></div>
</div></body></html>
